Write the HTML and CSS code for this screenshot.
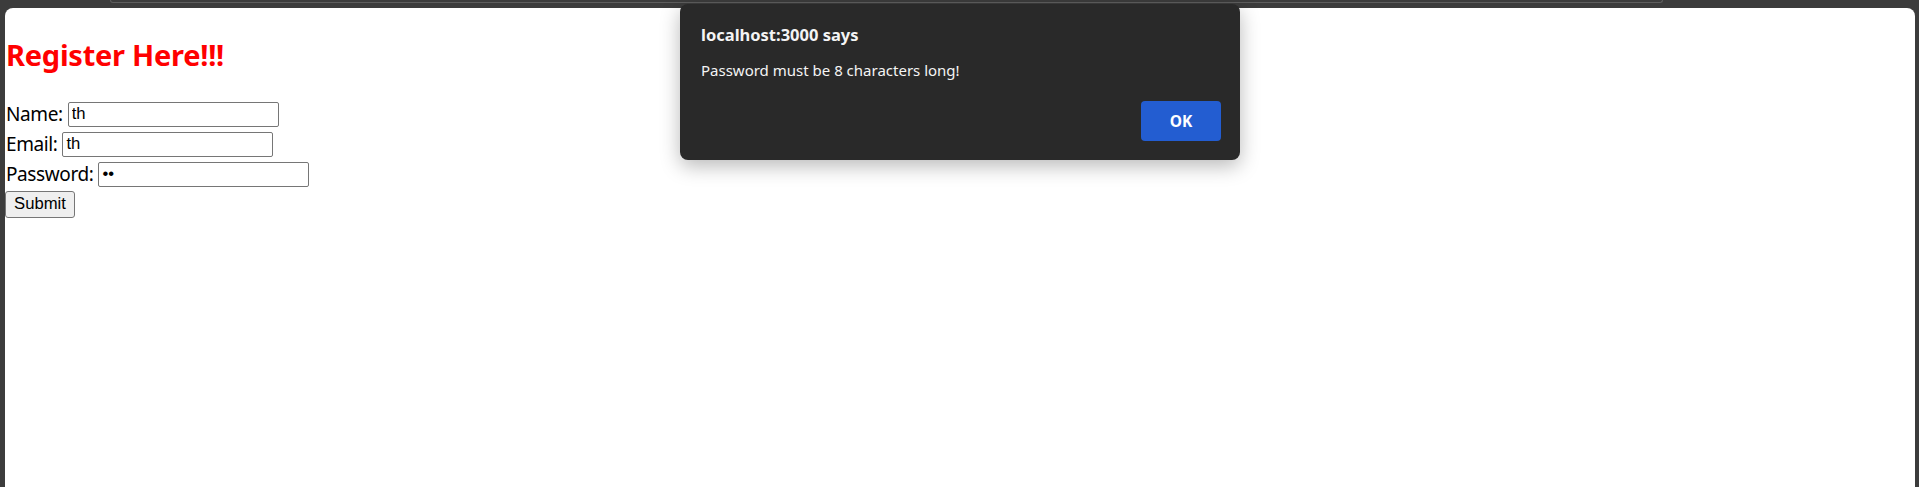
FILE: index.html
```html
<!DOCTYPE html>
<html lang="en">
<head>
<meta charset="utf-8">
<title>Register</title>
<link rel="stylesheet" href="styles.css">
</head>
<body class="window">
  <div class="topbar"><div class="omnibox"></div></div>
  <main class="page">
    <h2 class="title">Register Here!!!</h2>
    <form class="form">
      <div class="row"><label class="label" for="name">Name:</label><input class="field" id="name" type="text" value="th"></div>
      <div class="row"><label class="label" for="email">Email:</label><input class="field" id="email" type="text" value="th"></div>
      <div class="row"><label class="label" for="pw">Password:</label><input class="field" id="pw" type="password" value="th"></div>
      <div class="row"><button class="submit" type="button">Submit</button></div>
    </form>
  </main>
  <div class="dialog" role="alertdialog">
    <div class="dialog-title">localhost:3000 says</div>
    <div class="dialog-msg">Password must be 8 characters long!</div>
    <div class="dialog-actions"><button class="ok" type="button">OK</button></div>
  </div>
</body>
</html>
```
FILE: styles.css
```css
html, body {
  margin: 0;
  padding: 0;
}
.window {
  background: #3c3c3c;
  height: 487px;
  overflow: hidden;
  position: relative;
  font-family: "Noto Sans", "Open Sans", sans-serif;
}
.topbar {
  height: 8px;
  display: flex;
  align-items: flex-start;
}
.omnibox {
  margin-left: 110px;
  width: 1553px;
  height: 3px;
  box-sizing: border-box;
  border: 1px solid #5e5e5e;
  border-top: none;
  border-radius: 0 0 4px 4px;
}
.page {
  margin: 0 4px 0 5px;
  height: 479px;
  box-sizing: border-box;
  background: #ffffff;
  border-radius: 8px 8px 0 0;
  padding: 29px 0 0 1px;
}
.title {
  margin: 0;
  font-family: "Noto Sans", sans-serif;
  font-weight: 700;
  font-size: 29px;
  letter-spacing: -0.25px;
  line-height: 36px;
  color: #ff0000;
}
.form {
  margin-top: 26px;
}
.row {
  display: flex;
  align-items: center;
  gap: 5px;
  height: 30px;
}
.label {
  font-family: "Noto Sans", sans-serif;
  font-size: 19px;
  letter-spacing: -0.4px;
  line-height: 26px;
  color: #000;
}
.field {
  box-sizing: border-box;
  width: 211px;
  height: 25px;
  margin: 0;
  padding: 0 3px;
  border: 1px solid #767676;
  border-radius: 2px;
  background: #fff;
  font-family: "Liberation Sans", Arial, sans-serif;
  font-size: 16.67px;
  color: #000;
}
.submit {
  box-sizing: border-box;
  height: 27px;
  width: 70px;
  margin: 0 0 0 -1px;
  padding: 0;
  border: 1px solid #767676;
  border-radius: 3px;
  background: #efefef;
  font-family: "Liberation Sans", Arial, sans-serif;
  font-size: 16.67px;
  color: #000;
}
.dialog {
  position: absolute;
  left: 680px;
  top: 4px;
  width: 560px;
  height: 156px;
  box-sizing: border-box;
  padding: 21px 19px 19px 21px;
  background: #292929;
  border-radius: 8px;
  box-shadow: 0 6px 20px rgba(0, 0, 0, 0.28);
  color: #f4f4f4;
  display: flex;
  flex-direction: column;
}
.dialog-title {
  font-weight: 700;
  font-size: 16.5px;
  line-height: 20px;
}
.dialog-msg {
  margin-top: 15px;
  font-size: 15px;
  line-height: 20px;
}
.dialog-actions {
  margin-top: auto;
  display: flex;
  justify-content: flex-end;
}
.ok {
  width: 80px;
  height: 40px;
  border: none;
  border-radius: 4px;
  background: #235dd1;
  color: #fff;
  font-family: "Noto Sans", sans-serif;
  font-weight: 700;
  font-size: 15.5px;
}
```
